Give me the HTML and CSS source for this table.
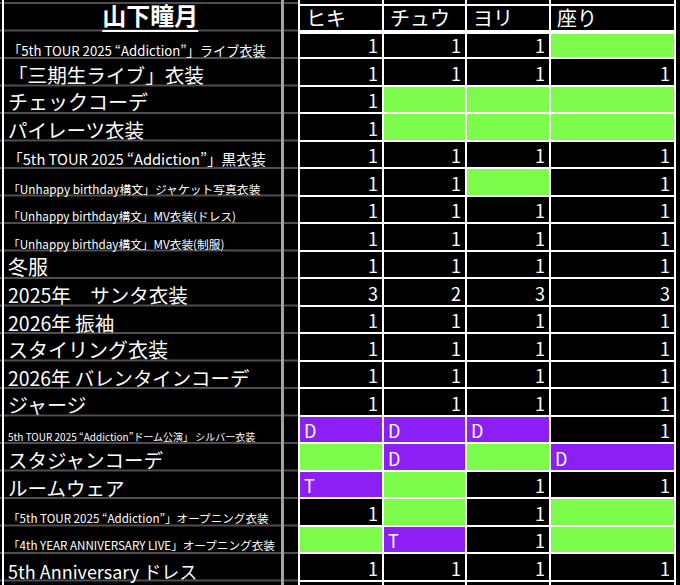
FILE: index.html
```html
<!DOCTYPE html>
<html lang="ja">
<head>
<meta charset="utf-8">
<title>山下瞳月</title>
<link rel="stylesheet" href="styles.css">
</head>
<body>
<div class="sheet">
  <div class="labels">
    <div class="edge"></div>
    <div class="names">
      <div class="name title"><span>山下瞳月</span></div>
      <div class="name f132">「5th TOUR 2025 “Addiction”」ライブ衣装</div>
      <div class="name f196">「三期生ライブ」衣装</div>
      <div class="name f20">チェックコーデ</div>
      <div class="name f195">パイレーツ衣装</div>
      <div class="name f147">「5th TOUR 2025 “Addiction”」黒衣装</div>
      <div class="name f118">「Unhappy birthday構文」ジャケット写真衣装</div>
      <div class="name f117">「Unhappy birthday構文」MV衣装(ドレス)</div>
      <div class="name f117">「Unhappy birthday構文」MV衣装(制服)</div>
      <div class="name f20">冬服</div>
      <div class="name f195">2025年　サンタ衣装</div>
      <div class="name f195">2026年 振袖</div>
      <div class="name f20">スタイリング衣装</div>
      <div class="name f194">2026年 バレンタインコーデ</div>
      <div class="name f20">ジャージ</div>
      <div class="name f10">5th TOUR 2025 “Addiction”ドーム公演」 シルバー衣装</div>
      <div class="name f195">スタジャンコーデ</div>
      <div class="name f195">ルームウェア</div>
      <div class="name f116">「5th TOUR 2025 “Addiction”」オープニング衣装</div>
      <div class="name f116">「4th YEAR ANNIVERSARY LIVE」オープニング衣装</div>
      <div class="name f18">5th Anniversary ドレス</div>
    </div>
    <div class="sep"></div>
  </div>

  <div class="grid">
    <div class="c"></div><div class="c"></div><div class="c"></div><div class="c"></div>

    <div class="c h">ヒキ</div><div class="c h">チュウ</div><div class="c h">ヨリ</div><div class="c h">座り</div>

    <div class="c t">1</div><div class="c t">1</div><div class="c t">1</div><div class="c t g"></div>
    <div class="c">1</div><div class="c">1</div><div class="c">1</div><div class="c">1</div>
    <div class="c">1</div><div class="c g"></div><div class="c g"></div><div class="c g"></div>
    <div class="c">1</div><div class="c g"></div><div class="c g"></div><div class="c g"></div>
    <div class="c">1</div><div class="c">1</div><div class="c">1</div><div class="c">1</div>
    <div class="c">1</div><div class="c">1</div><div class="c g"></div><div class="c">1</div>
    <div class="c">1</div><div class="c">1</div><div class="c">1</div><div class="c">1</div>
    <div class="c">1</div><div class="c">1</div><div class="c">1</div><div class="c">1</div>
    <div class="c">1</div><div class="c">1</div><div class="c">1</div><div class="c">1</div>
    <div class="c">3</div><div class="c">2</div><div class="c">3</div><div class="c">3</div>
    <div class="c">1</div><div class="c">1</div><div class="c">1</div><div class="c">1</div>
    <div class="c">1</div><div class="c">1</div><div class="c">1</div><div class="c">1</div>
    <div class="c">1</div><div class="c">1</div><div class="c">1</div><div class="c">1</div>
    <div class="c">1</div><div class="c">1</div><div class="c">1</div><div class="c">1</div>
    <div class="c p">D</div><div class="c p">D</div><div class="c p">D</div><div class="c">1</div>
    <div class="c g"></div><div class="c p">D</div><div class="c g"></div><div class="c p">D</div>
    <div class="c p">T</div><div class="c g"></div><div class="c">1</div><div class="c">1</div>
    <div class="c">1</div><div class="c g"></div><div class="c">1</div><div class="c g"></div>
    <div class="c g"></div><div class="c p">T</div><div class="c">1</div><div class="c g"></div>
    <div class="c">1</div><div class="c">1</div><div class="c">1</div><div class="c">1</div>

    <div class="c"></div><div class="c"></div><div class="c"></div><div class="c"></div>
  </div>
</div>
</body>
</html>
```

FILE: styles.css
```css
html, body {
  margin: 0;
  height: 585px;
  overflow: hidden;
  background: #000;
}

body {
  font-family: "Noto Sans CJK JP", "Noto Sans", sans-serif;
  color: #fff;
}

.sheet {
  display: flex;
  width: 680px;
  height: 585px;
  overflow: hidden;
}

/* ---------- left: name column ---------- */
.labels {
  flex: none;
  width: 298px;
  display: flex;
  background-image: linear-gradient(to bottom, #4f4f4f 0, #4f4f4f 2px, transparent 2px);
  background-size: 100% 27.5px;
  background-position: 0 2px;
}

.edge {
  flex: none;
  width: 1.5px;
  margin-left: 2px;
  background: #fff;
}

.names {
  flex: none;
  width: 277.5px;
  display: grid;
  grid-template-rows: 29.5px repeat(20, 25.5px);
  row-gap: 2px;
  align-content: start;
}

.sep {
  flex: none;
  width: 3px;
  background: #a3a3a3;
}

.name {
  display: flex;
  align-items: flex-end;
  padding: 0 0 0 4.5px;
  white-space: nowrap;
  line-height: 1;
  min-width: 0;
}

.title {
  justify-content: center;
  padding: 0 0 3px 16px;
  font-size: 24px;
  font-weight: 700;
}

.title span {
  text-decoration: underline;
  text-decoration-thickness: 2px;
  text-underline-offset: 5px;
}

.f10 { font-size: 10px; }
.f116 { font-size: 11.6px; }
.f117 { font-size: 11.7px; }
.f118 { font-size: 11.8px; }
.f132 { font-size: 13.2px; }
.f147 { font-size: 14.7px; }
.f18 { font-size: 18px; }
.f194 { font-size: 19.4px; }
.f195 { font-size: 19.5px; }
.f196 { font-size: 19.6px; }
.f20 { font-size: 20px; }

/* ---------- right: value grid ---------- */
.grid {
  flex: none;
  align-self: flex-start;
  width: 378px;
  box-sizing: border-box;
  padding: 0 2px;
  background: #fff;
  display: grid;
  grid-template-columns: 82px 81px 82px 123px;
  grid-template-rows: 3.5px 24px repeat(20, 25.5px) 20px;
  gap: 2px;
}

.c {
  background: #000;
  display: flex;
  align-items: flex-end;
  justify-content: flex-end;
  padding: 0 4px 3px 0;
  font-size: 18px;
  line-height: 1;
}

.h {
  justify-content: flex-start;
  padding: 0 0 2px 6px;
  font-size: 20px;
}

.t {
  box-shadow: inset 0 2px 0 #fff;
}

.g {
  background: #7cfb4b;
}

.p {
  background: #8b1ff4;
  justify-content: flex-start;
  padding-left: 4px;
}
```
